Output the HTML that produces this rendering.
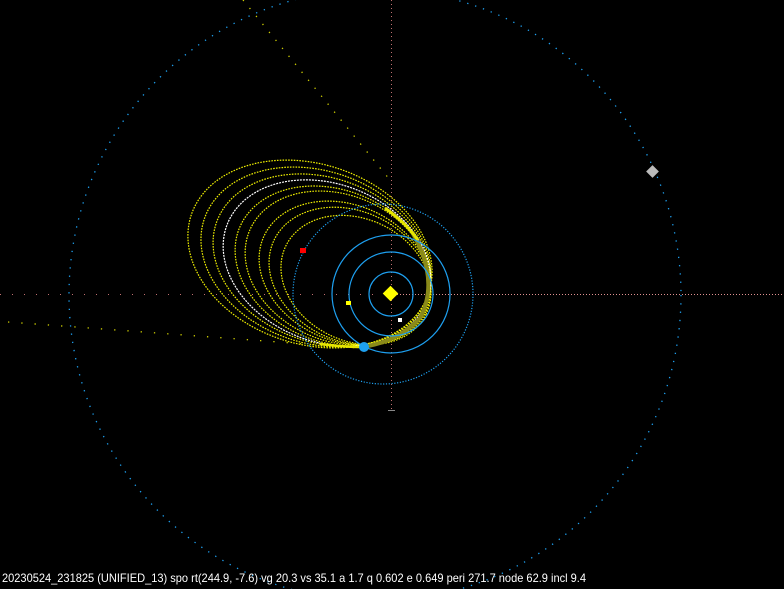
<!DOCTYPE html>
<html><head><meta charset="utf-8"><style>
html,body{margin:0;padding:0;background:#000;width:784px;height:589px;overflow:hidden}
svg{display:block}
</style></head><body>
<svg width="784" height="589" viewBox="0 0 784 589" xmlns="http://www.w3.org/2000/svg">
<rect width="784" height="589" fill="#000"/>
<line x1="0" y1="294.5" x2="391" y2="294.5" stroke="#c07070" stroke-width="1" stroke-dasharray="1 11"/>
<line x1="391" y1="294.5" x2="784" y2="294.5" stroke="#e09090" stroke-width="1" stroke-dasharray="1 2"/>
<line x1="391.5" y1="0" x2="391.5" y2="410" stroke="#c07070" stroke-width="1" stroke-dasharray="1 3"/>
<line x1="388" y1="410.5" x2="395" y2="410.5" stroke="#888" stroke-width="1"/>
<circle cx="375" cy="295" r="306" fill="none" stroke="#1ea0f0" stroke-width="1.3" stroke-dasharray="1.3 7"/>
<rect x="648" y="167" width="9" height="9" fill="#bbb" transform="rotate(45 652.5 171.5)"/>
<line x1="243" y1="0" x2="390" y2="180" stroke="#d0d000" stroke-width="1.3" stroke-dasharray="1.3 9"/>
<line x1="8" y1="322" x2="360" y2="348" stroke="#d0d000" stroke-width="1.3" stroke-dasharray="1.3 12"/>
<g fill="none" stroke="#f0f000" stroke-width="1.2" stroke-dasharray="1.6 1.2">
<ellipse cx="310" cy="254" rx="125" ry="90" transform="rotate(18 310 254)"/>
<ellipse cx="316" cy="257" rx="118" ry="86" transform="rotate(19 316 257)"/>
<ellipse cx="322" cy="260" rx="112" ry="82" transform="rotate(20 322 260)"/>
<ellipse cx="333" cy="266" rx="101" ry="76" transform="rotate(22 333 266)"/>
<ellipse cx="338" cy="268" rx="96" ry="73" transform="rotate(23 338 268)"/>
<ellipse cx="345" cy="273" rx="89" ry="68" transform="rotate(24 345 273)"/>
<ellipse cx="350" cy="276" rx="84" ry="65" transform="rotate(25 350 276)"/>
<ellipse cx="356" cy="280" rx="78" ry="61" transform="rotate(26 356 280)"/>
</g>
<ellipse cx="327" cy="263" rx="107" ry="79" transform="rotate(21 327 263)" fill="none" stroke="#fff" stroke-width="1.2" stroke-dasharray="2 1"/>
<path d="M412 232 Q440 280 420 318 Q400 340 368 346" fill="none" stroke="#8a8a1a" stroke-width="4"/>
<path d="M385 208 Q405 222 418 240" fill="none" stroke="#e6e600" stroke-width="3"/>
<path d="M320 344 Q345 347 362 347" fill="none" stroke="#e6e600" stroke-width="2.5"/>
<g fill="none" stroke="#1ea0f0" stroke-width="1.2">
<circle cx="391" cy="294" r="22"/>
<circle cx="391" cy="294" r="42"/>
<circle cx="391" cy="294" r="59"/>
<circle cx="383" cy="294" r="90" stroke-dasharray="1.2 1.6"/>
</g>
<rect x="385" y="288" width="11" height="11" fill="#ffff00" transform="rotate(45 390.5 293.5)"/>
<rect x="346" y="301" width="5" height="4" fill="#ffff00"/>
<rect x="398" y="318" width="4" height="4" fill="#fff"/>
<rect x="300" y="248" width="6" height="5" fill="#ff0000"/>
<circle cx="364" cy="347" r="5" fill="#1ea0f0"/>
<text x="2" y="582" fill="#fff" font-family="'Liberation Sans',sans-serif" font-size="12" textLength="584" lengthAdjust="spacingAndGlyphs">20230524_231825 (UNIFIED_13) spo rt(244.9, -7.6) vg 20.3 vs 35.1 a 1.7 q 0.602 e 0.649 peri 271.7 node 62.9 incl 9.4</text>
</svg>
</body></html>
